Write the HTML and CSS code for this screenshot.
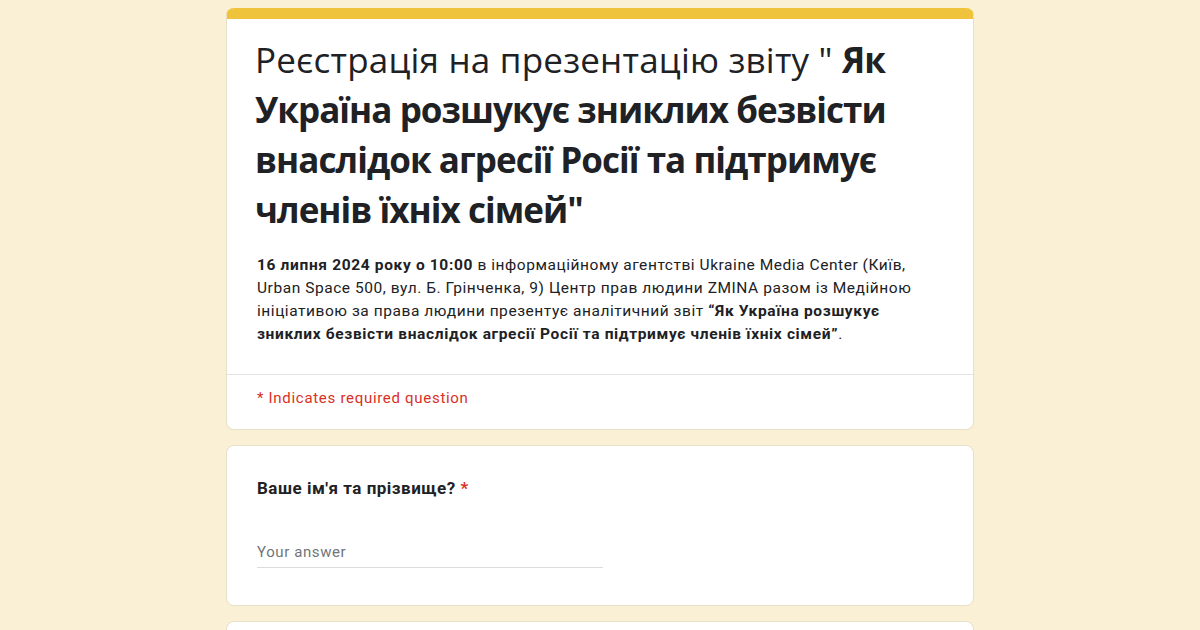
FILE: index.html
```html
<!DOCTYPE html>
<html lang="uk">
<head>
    <meta charset="UTF-8">
    <meta name="viewport" content="width=device-width, initial-scale=1.0">
    <title>Реєстрація на презентацію звіту</title>
    <link rel="stylesheet" href="styles.css">
</head>
<body>
    <div class="form">
        <div class="card header-card">
            <div class="header-main">
                <h1 class="form-title">Реєстрація на презентацію звіту " <strong>Як Україна розшукує зниклих безвісти внаслідок агресії Росії та підтримує членів їхніх сімей"</strong></h1>
                <p class="form-desc"><strong>16 липня 2024 року о 10:00</strong> в інформаційному агентстві Ukraine Media Center (Київ, Urban Space 500, вул. Б. Грінченка, 9) Центр прав людини ZMINA разом із Медійною ініціативою за права людини презентує аналітичний звіт <strong>“Як Україна розшукує зниклих безвісти внаслідок агресії Росії та підтримує членів їхніх сімей”</strong>.</p>
            </div>
            <div class="required-note">* Indicates required question</div>
        </div>

        <div class="card question">
            <div class="question-title">Ваше ім'я та прізвище? <span class="star">*</span></div>
            <input class="answer" type="text" placeholder="Your answer">
        </div>

        <div class="card question">
            <div class="question-title">&nbsp;</div>
        </div>
    </div>
</body>
</html>
```

FILE: styles.css
```css
* {
    margin: 0;
    padding: 0;
    box-sizing: border-box;
}

body {
    font-family: Roboto, 'Liberation Sans', sans-serif;
    color: #202124;
    background: #faf0d6;
    padding-top: 8px;
}

.form {
    width: 748px;
    margin: 0 auto;
}

.card {
    background: #ffffff;
    border: 1px solid #e8e0c9;
    border-radius: 8px;
    margin-bottom: 15px;
}

.header-card {
    border-top: 11px solid #efc43c;
}

.header-main {
    padding: 16px 30px 28px;
    border-bottom: 1px solid #e3e3e3;
}

.form-title {
    font-family: 'Open Sans', sans-serif;
    font-weight: 400;
    font-size: 35px;
    line-height: 50px;
    letter-spacing: 0.2px;
    margin-bottom: 19px;
    margin-left: -2px;
}

.form-title strong {
    font-weight: 700;
    letter-spacing: -0.95px;
}

.form-desc {
    font-size: 15.5px;
    line-height: 23px;
    letter-spacing: 0.55px;
}

.form-desc strong {
    font-weight: 700;
    letter-spacing: 0.65px;
}

.required-note {
    color: #d93025;
    font-size: 15px;
    letter-spacing: 0.7px;
    padding: 14px 30px 22px;
}

.question {
    padding: 30px 30px 37px;
}

.question-title {
    font-size: 17px;
    font-weight: 700;
    line-height: 24px;
    letter-spacing: 0.5px;
}

.star {
    color: #d93025;
}

.answer {
    display: block;
    width: 346px;
    margin-top: 39px;
    border: none;
    border-bottom: 1px solid #dadce0;
    font-family: Roboto, sans-serif;
    font-size: 15px;
    letter-spacing: 0.6px;
    padding: 4px 0 6px;
    outline: none;
}

.answer::placeholder {
    color: #70757a;
}
```
